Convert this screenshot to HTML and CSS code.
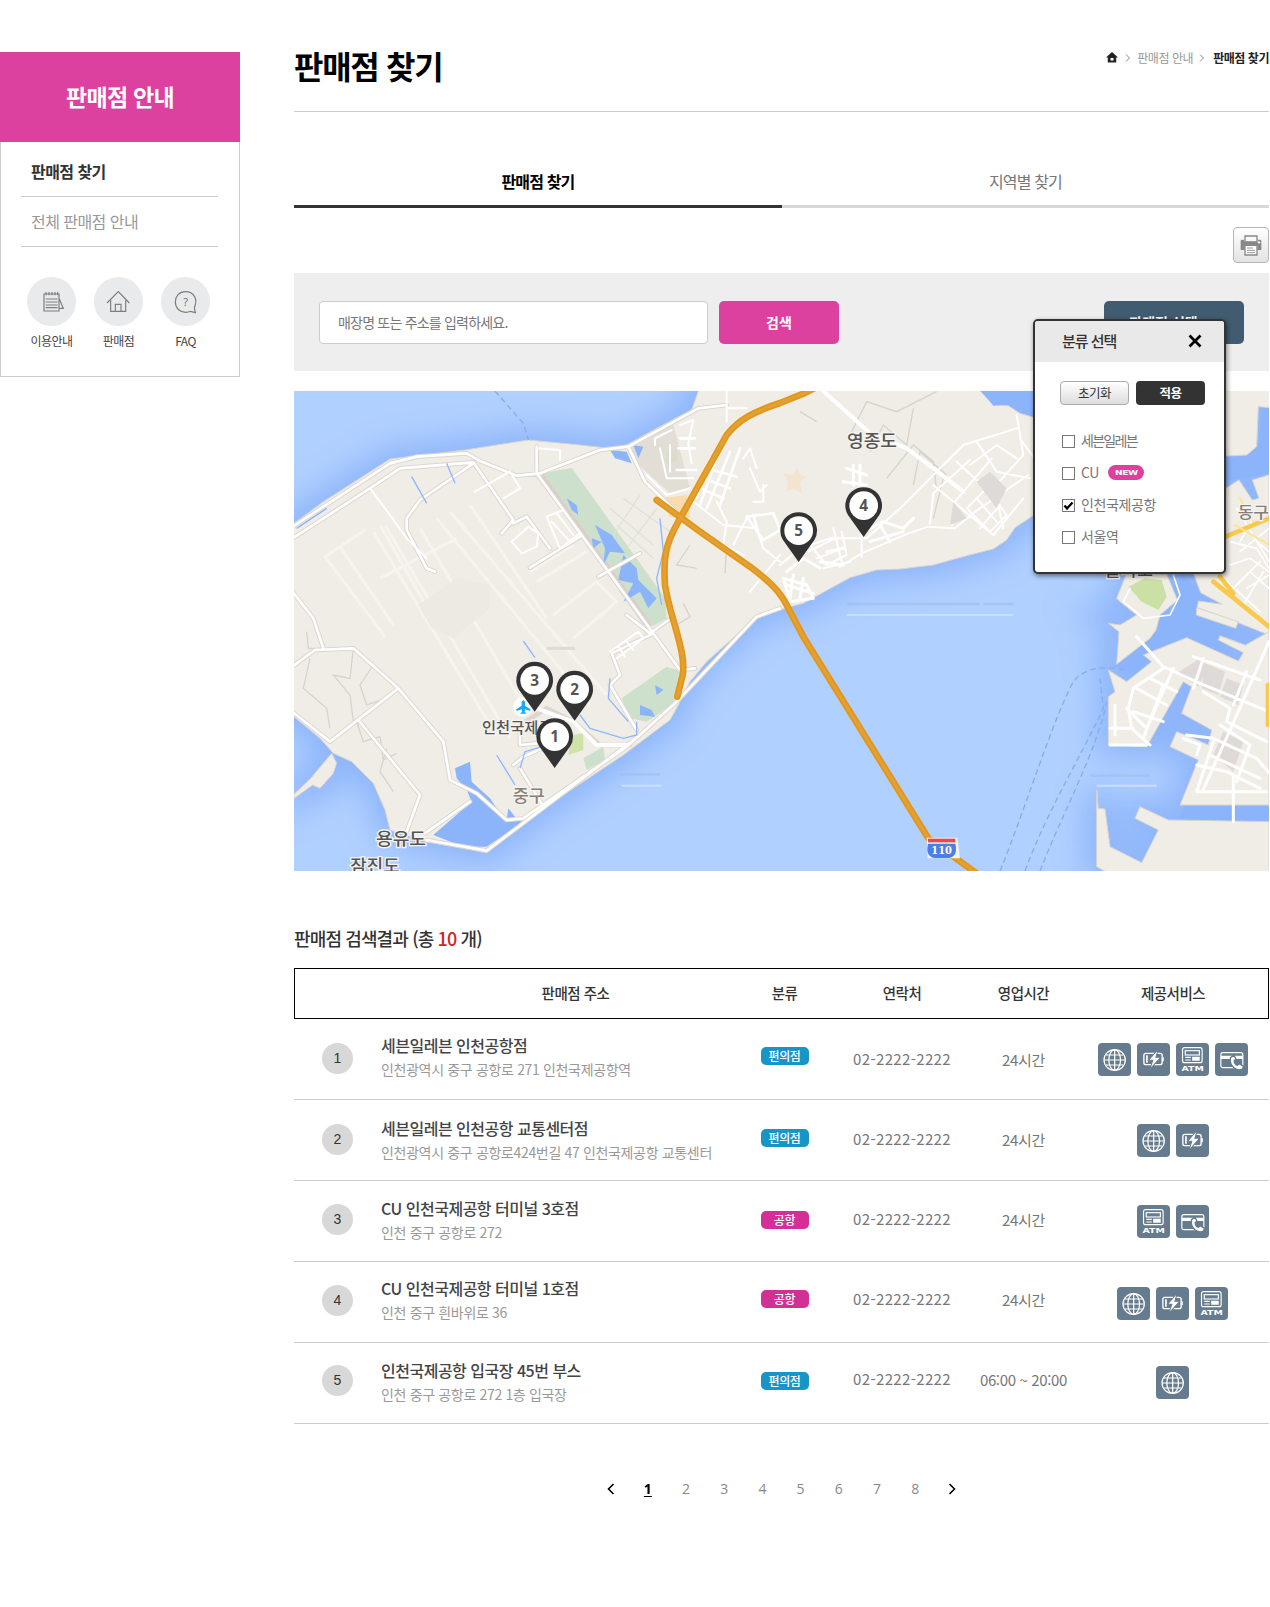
FILE: index.html
```html
<!DOCTYPE html>
<html lang="ko">
<head>
<meta charset="utf-8">
<title>판매점 찾기</title>
<link rel="stylesheet" href="styles.css">
</head>
<body>
<svg class="defs" width="0" height="0" aria-hidden="true">
  <symbol id="globe" viewBox="0 0 96 99" preserveAspectRatio="none">
    <g fill="none" stroke="#fff" stroke-width="3.6"><circle cx="48.5" cy="51" r="31"/><ellipse cx="48.5" cy="51" rx="17" ry="31"/><path d="M48.5 20v62M18 51h61M23 36h51M23 66h51"/></g>
  </symbol>
  <symbol id="charge" viewBox="0 0 96 99" preserveAspectRatio="none">
    <rect x="20" y="31" width="53" height="34" rx="6" fill="none" stroke="#fff" stroke-width="4"/>
    <path d="M29 37v22" stroke="#fff" stroke-width="5"/><path d="M76 43v12" stroke="#fff" stroke-width="4"/>
    <path d="M62 18L33 52h13l-9 28 32-37H55z" fill="#fff" stroke="#667c8e" stroke-width="3"/>
  </symbol>
  <symbol id="atm" viewBox="0 0 96 99" preserveAspectRatio="none">
    <g fill="none" stroke="#fff" stroke-width="3.4"><rect x="19" y="14" width="57" height="45" rx="6"/><rect x="27" y="23" width="41" height="13"/><path d="M27 43h16M27 51h16"/></g>
    <path d="M47 41h22v12H47z" fill="#fff"/>
    <text x="16" y="85" textLength="65" lengthAdjust="spacingAndGlyphs" font-family="DejaVu Sans" font-weight="700" font-size="21" fill="#fff">ATM</text>
  </symbol>
  <symbol id="card" viewBox="0 0 96 99" preserveAspectRatio="none">
    <rect x="17" y="29" width="64" height="45" rx="6" fill="none" stroke="#fff" stroke-width="3.4"/>
    <path d="M17 38h64v10H17z" fill="#fff"/>
    <path d="M45 44q-3 20 10 30 14 11 25 4l3-8-12-8-6 5q-9-4-9-14l5-5-6-12z" fill="#fff" stroke="#667c8e" stroke-width="4"/>
  </symbol>
</svg>
<div class="page">
  <aside class="side">
    <h2 class="side-title">판매점 안내</h2>
    <div class="side-body">
      <ul class="side-menu">
        <li class="on">판매점 찾기</li>
        <li>전체 판매점 안내</li>
      </ul>
      <ul class="quick">
        <li><span class="disc"><svg width="49" height="49" viewBox="0 0 147 147" fill="none" stroke="#7d7d7d" stroke-width="3.5"><path d="M51 51h45v51H51zM56 66h36M56 75h36M56 84h36M56 92h36M57 45v10M66 45v10M75 45v10M84 45v10M92 45v10M97 66l12 28H98"/></svg></span>이용안내</li>
        <li><span class="disc"><svg width="49" height="49" viewBox="0 0 147 147" fill="none" stroke="#7d7d7d" stroke-width="3.5"><path d="M39 78l34-34 33 34M50 70v33h45V70M64 103V82h17v21"/></svg></span>판매점</li>
        <li><span class="disc"><svg width="49" height="49" viewBox="0 0 147 147"><path d="M103 107L100 92C112 66 98 44 73 44c-18 0-30 14-30 31 0 19 14 31 31 31 6 0 11-1 14-3z" fill="none" stroke="#7d7d7d" stroke-width="3.5"/><text x="74" y="86" text-anchor="middle" font-family="Open Sans" font-size="33" fill="#666">?</text></svg></span>FAQ</li>
      </ul>
    </div>
  </aside>

  <main class="content">
    <header class="head">
      <h1>판매점 찾기</h1>
      <nav class="crumbs">
        <svg width="12" height="11" viewBox="0 0 12 11"><path d="M6 0l6 5.500h-1.800V10.500H1.800V5.500H0z" fill="#222"/><path d="M4.500 6h3v2.500h-3z" fill="#fff"/></svg>
        <svg class="sep" width="6" height="8" viewBox="0 0 6 8"><path d="M1 .5L4.500 4 1 7.500" fill="none" stroke="#888"/></svg>
        <span>판매점 안내</span>
        <svg class="sep2" width="6" height="8" viewBox="0 0 6 8"><path d="M1 .5L4.500 4 1 7.500" fill="none" stroke="#888"/></svg>
        <b>판매점 찾기</b>
      </nav>
    </header>
    <div class="tabs"><div class="tab on">판매점 찾기</div><div class="tab">지역별 찾기</div></div>
    <div class="tools">
      <button class="print" aria-label="인쇄"><svg width="22" height="21" viewBox="0 0 66 63"><path d="M15 3h36v18H15z" fill="#f8f8f8" stroke="#888" stroke-width="4"/><path d="M2 18q0-4 4-4h6v6h42v-6h6q4 0 4 4v27H52V31H14v14H2z" fill="#888"/><path d="M15 31h36v29H15z" fill="#fff" stroke="#888" stroke-width="4"/><path d="M21 39h18M21 46h24M21 53h24" stroke="#999" stroke-width="3"/><circle cx="57" cy="22" r="3.500" fill="#fff"/></svg></button>
    </div>
    <div class="search">
      <div class="field">매장명 또는 주소를 입력하세요.</div>
      <button class="btn-search">검색</button>
      <div class="picker">
        <button class="btn-pick">판매점 선택</button>
        <section class="popup">
          <div class="popup-head"><span>분류 선택</span><svg width="14" height="14" viewBox="0 0 14 14"><path d="M1.500 1.500l11 11M12.500 1.500l-11 11" stroke="#000" stroke-width="2.700"/></svg></div>
          <div class="popup-btns"><button class="reset">초기화</button><button class="apply">적용</button></div>
          <ul class="checks">
            <li><i class="box"></i><span class="tight">세븐일레븐</span></li>
            <li><i class="box"></i><span>CU</span><svg class="new" width="36" height="15" viewBox="0 0 36 15"><rect width="36" height="15" rx="7.500" fill="#dc419f"/><text x="7" y="10" textLength="22.500" lengthAdjust="spacingAndGlyphs" font-family="DejaVu Sans" font-weight="700" font-size="7" fill="#fff">NEW</text></svg></li>
            <li><i class="box"><svg width="11" height="11" viewBox="0 0 11 11"><path d="M1.500 5.500l2.500 3 5.500-6" fill="none" stroke="#000" stroke-width="2.300"/></svg></i><span>인천국제공항</span></li>
            <li><i class="box"></i><span>서울역</span></li>
          </ul>
        </section>
      </div>
    </div>

    <svg class="map" width="975" height="480" viewBox="12 18 2925 1440">
      <defs>
        <filter id="soft" x="-10%" y="-10%" width="120%" height="120%"><feGaussianBlur stdDeviation="45"/></filter>
        <g id="land">
          <path d="M-80 480L12 415 100 350 300 222 525 195 715 165 870 180 960 190 1000 185 1100 130 1205 75 1225 18V-60H2060L2070 18 2110 60 2155 62 2190 85 2240 100V385L2175 428 2150 465 2110 492 2030 512 1930 540 1830 552 1760 555 1680 578 1600 622 1540 655 1490 668 1460 678 1390 705 1250 830 1200 890 1165 960 1140 1005 1000 1110 760 1270 590 1404 520 1390 410 1370 300 1335 285 1275 250 1195 185 1130 130 1105 90 1060 0 985H-80z"/>
          <path d="M62 1180L125 1105 140 1135 130 1165 90 1210 68 1200 12 1240V1228z"/>
          <g transform="translate(1470)">
            <path d="M1300-40h200V70l-65-5-5 120-30 25-100 5z"/>
            <path d="M1337 310l40-25 40 60 20-5-20-55 50-15v480l-100-40-115-42 3-20 72 10-65-35-22-60V500z"/>
            <path d="M1010 640l30-75 120 2 32 78-52 45-12 45-18 25-100 78 7-98-32-25 35 5 50-30-50-40z"/>
            <path d="M1250 668l125 42-8 20-118-40zM1320 752l75 28-5 15-72-30z"/>
            <path d="M1040 890l75-60-25-20 130-52 155 70 15-25-75-38 5-12 75 28 72-41v520h-267l55-135-85-40 20-45 50 20 45 20 10-45-90-50 30-80-25-15-110 195-115-5V935l20-15-20-65z"/>
            <path d="M950 1215l5 55 20 2 15 113 95 48 50-98-70-35 15-35 85 40 302 5v168h-457l-60-33z"/>
          </g>
        </g>
      </defs>
      <rect x="12" y="18" width="2925" height="1440" fill="#b0d0ff"/>
      <use href="#land" fill="#84adf9" stroke="#84adf9" stroke-width="75" filter="url(#soft)" opacity=".75"/>
      <path d="M2070 10h200v130h-60l-60-75zM2700 210l130-5 75-28 10-112h30v200l-245 40zM2680 567l60 70 110 70-50 90-140 50-110 20-80-20 90-100 60-90zM2900 1110h37v200l-270-10 20-40 220-10z" fill="#8cb4fb"/>
      <use href="#land" fill="#f0ede7" stroke="#d9d4cf" stroke-width="3"/>
      <path d="M430 1350L545 1250 530 1215 500 1180 495 1150 540 1130 545 1190 600 1240 640 1300 700 1310 590 1385 520 1385z" fill="#8cb4fb"/>
      <path d="M2070 12l40 50 45-5-10-45z" fill="#8cb4fb"/>

      <!-- airfield -->
      <g fill="none" stroke="#f6f4ee" stroke-width="9">
        <path d="M225 435L105 515 285 755M150 485L310 720M250 440L600 1020M285 420L660 1060M390 430L700 960M440 400L900 960M480 380L950 930M540 360L770 700M270 580L500 460M720 560L850 480M740 590L890 500M790 690L920 590 980 650 850 760M270 420L430 700"/>
      </g>
      <path d="M385 660L500 580 600 600 600 670 490 760 425 730z" fill="#edeae3"/>
      <!-- parks -->
      <path d="M760 265L845 248 1125 640 1130 700 1090 722z" fill="#cde0cb"/><path d="M760 265L1090 722 1060 720 750 280z" fill="#d8d0c8"/>
      <path d="M995 940L1130 845 1180 860 1160 950 1070 1010 1020 1000zM880 1120L940 1085 945 1125 890 1155z" fill="#cde0cb"/>
      <path d="M845 1050l35-5v50l-45 15zM1130 200l35-10-5 40-30 10z" fill="#cfe3a8"/>
      <path d="M1020 190l130-70 50 190-60 15-110-100z" fill="#dedad2" opacity=".8"/>
      <path d="M1110 340l80-10 10 70-60-5z" fill="#f8dcae"/>
      <path d="M1480 265l30 5 10-25 10 25 20 5-20 15 5 35-25-15-20 10 5-30z" fill="#f3e4cf"/>
      <path d="M2515 605l50-25 50 5 15 50-25 40-50-25z" fill="#cbe0a5"/>
      <g fill="#8cb4fb"><path d="M960 195l50 5 15 35-50-15zM1030 180l30 5-15 35zM830 340l30 20 5 30-20-15zM905 460l30 10-25 20zM915 420l50 30 40 55-45-5-20 40 5-50zM1000 510l40 40 5 35 55 55-25 30-25-50-50 30 30-55-45-10zM1050 960l35 15 10 20-45-5zM1095 900l25 15-20 15zM655 1270l20 25-25 10z"/></g>

      <!-- small lanes -->
      <g fill="none" stroke="#d8d3cc" stroke-width="4">
        <path d="M50 740l5 50 50 0M190 790l-10 90-50-10 50 60 10 80M250 840l-40 60 20 60 60-20M60 820l-20 90 70 60 10 60M200 1010l20 60 50-15 10 70 40-20M290 1090l-20 70 40 60M1200 480l-40 60 60 10M1310 485l-5 80M1180 655l20 40-40 25M1680 150l50-100 90 30 120-60M1740 200l40-80 70 60 20-110M1790 280l80-100 60 50 10 90M1870 300l20-100 80 70M1580 110l-50-30M1930 400l30-120"/>
      </g>
      <path d="M960 370l130 110M1000 340l140 100M1010 490l90-120M980 420l110 100M970 450l80-120" fill="none" stroke="#e3dfd9" stroke-width="4"/>
      <!-- road casing and road surface -->
      <g fill="none" stroke-linejoin="round" stroke-linecap="round">
        <g stroke="#ddd6d0" stroke-width="14">
          <path d="M0 430L300 235 380 215 530 205 570 228 680 272 750 265 930 195 1015 185 1225 70 1310 60M0 465L240 310 330 250 550 232 670 405 635 445M670 415L710 395 780 490M720 548L870 455M550 235L390 345 350 400 350 435 410 550 435 560M740 185V265L1170 855 1215 850M925 575L1050 505M1010 690L1080 745 1135 705M1015 185L1065 290 1200 420"/>
          <path d="M0 850L75 795 190 790 325 910 460 1070 480 1185 560 1225 650 1305 700 1300 1010 1085 1160 950 1400 695 1470 670M0 975L120 1070 325 910M205 1005L390 1230 350 1340M0 610L70 700 100 790M1090 745L965 805 990 870 960 900 1040 1035M410 1365L590 1397 1050 1050M540 1250L405 1345M690 1150L760 1265M670 1140L700 1115 800 1070 690 1080 690 1020 770 970 850 1010 930 1080 1020 1080"/>
        </g>
        <g stroke="#fff" stroke-width="8">
          <path d="M0 430L300 235 380 215 530 205 570 228 680 272 750 265 930 195 1015 185 1225 70 1310 60M0 465L240 310 330 250 550 232 670 405 635 445M670 415L710 395 780 490M720 548L870 455M550 235L390 345 350 400 350 435 410 550 435 560M740 185V265L1170 855 1215 850M925 575L1050 505M1010 690L1080 745 1135 705M1015 185L1065 290 1200 420"/>
          <path d="M0 850L75 795 190 790 325 910 460 1070 480 1185 560 1225 650 1305 700 1300 1010 1085 1160 950 1400 695 1470 670M0 975L120 1070 325 910M205 1005L390 1230 350 1340M0 610L70 700 100 790M1090 745L965 805 990 870 960 900 1040 1035M410 1365L590 1397 1050 1050M540 1250L405 1345M690 1150L760 1265M670 1140L700 1115 800 1070 690 1080 690 1020"/>
        </g>
        <path d="M740 970L850 1010 920 1080 1010 1080M1600 18L1740 145 1850 190 1930 250 2020 320" stroke="#fff" stroke-width="12"/>
        <g stroke="#fff" stroke-width="6">
          <path d="M240 310L300 390 350 460 410 520M555 320L660 260 690 310 640 340M770 395l50-20 50 70-60 45zM785 410l55 60M800 385l50 65M665 470l50-45 30 20-5 40-45 20zM960 800l85-60 15 20-80 60M985 785l20 30M1010 770l20 25M740 190l70 5v30M1095 180v-20l50-25M1110 190l20 90 80 0M1140 180v80M1170 120l40-15-15 70 10 60M1070 270l60 60 70-20M1310 20v90M1310 70l60 0M1380 250l30 70 20-20M1400 250l-20-60-20 30M1420 300v50h-30M1260 220l-40 120M1280 350l30 60-10 70 60 30M1210 350l90 70 100 10 20 60 50 40M1330 480l40-80M1380 620l90-110"/>
          <path stroke-width="8" d="M1250 250l90 25M1240 280l80 30M1230 310l70 30M1290 190l-60 170M1320 200l-70 170M1350 190l-60 170M1370 395l80-10 20 50-50 30zM1390 390l20 70M1170 160h45M1165 190h50M1160 255h60"/>
          <path d="M1470 540L1530 490 1620 460 1730 460 1830 370 1940 260 2020 180 2180 130M1555 500l80-40M1650 545l65-40 140-60 60-20 80 5 60-50 160-110M1920 415l10-90 110-100M1930 300l180 150 90-110M2000 230l120 110 20 90M1985 420l10-70 110-130M2060 170l60 90 100 20M2180 90l20 120-100 110M2030 370l60-60 60 80-50 50zM2060 340l60 70M2070 430l60-70M1715 515v-100l-35-30M1560 480l50 60 60-30-15-70M1580 520l80-30M1600 550l80-20M1630 430l25 100M2190 160l50 70M2040 240l80-60 60 40"/>
          <path stroke-width="9" d="M1480 580l70 20 20 40-70 10zM1490 560l50-40 50 30M1490 600l80 25M1510 570l-10 70M1540 580l-10 60M1590 530l70 10M1610 500l50-10M1670 250l60 20M1690 240v60M1710 240v60M1660 290l70 10M1720 440l60-30 60 20 30-30M1740 470l100-30M1770 420l30 50"/>
        </g>
        <!-- port -->
        <g fill="#dfdad7" stroke="none"><path d="M2660 865l70-45 25 25-30 60zM2745 835l60 25-20 70-50-20zM2810 880l50 20-15 60-55-25zM2800 1040l60 30-30 90-60-50zM2060 290l40-30 50 50-30 60zM1990 350l40 50-50 20z"/></g>
        <g stroke="#fff" stroke-width="9">
          <path d="M2540 755l80 90 110 50 207 85M2937 770l-110 250-90 200M2620 850l-90 60-15 60 10 60 55 50M2510 970l60 60 80-180M2540 910l90 50M2530 980l90 30M2580 880l80 40M2560 1060l60-160M2690 1050l80 10 130 60 60 70M2740 920l80 50-10 40 120 60M2790 1020l90 60-40 110M2770 1070l-50 150 210 0M2760 1110l150 70M2720 1140l90 20 100 50M2830 1170v140M2680 1060l50 20-10 30M2475 960v90M2460 1030h70M2460 1080h110M2740 820l-30 90M2870 860l-40 100M2710 815l200 70"/>
          <path stroke-width="5" d="M2840 370l97 160M2820 470l80 20 37 60M2820 540l60-20 57 40M2830 610l80-80M2860 660l60-100M2800 580l110 100M2850 500l87-70M2890 400l-40 70M2520 610l-20 40 60 50 80-10 30-60-20-60M2880 560l57 50M2870 610l67-40M2900 470l37 30"/>
        </g>
        <path d="M2807 455L2937 400M2770 590L2937 725M2790 575l40 50M2934 900v120" stroke="#fac84c" stroke-width="14"/>
        <path d="M2835 420l102 60M2850 340l40 70" stroke="#fde58a" stroke-width="6"/>
      </g>
      <g fill="none" stroke="#8fb7fc" stroke-width="4">
        <path d="M365 275l45 80M470 235l25 60M700 768l35 50M1110 400l10 100-20 80 15 80M870 990l30 40 100 30 40-10V1010M960 880l-5 60 60 70M690 1150l15-50 100-30M620 1110l55 90M20 430l90-60"/>
      </g>
      <g fill="none" stroke="#87abef" stroke-width="4" stroke-dasharray="17 11"><path d="M615 18L700 115 715 165M2130 1458C2210 1260 2290 1000 2350 890 2380 850 2440 840 2500 855M2205 1458C2270 1280 2370 1120 2440 970L2430 880M2250 1458C2310 1300 2420 1100 2450 950"/></g>
      <g fill="none"><path d="M1670 657h400M2080 657h90M2400 1172h180M990 1168h120" stroke="#9ebdec" stroke-width="7" opacity=".6"/><path d="M770 790h85" stroke="#dedad4" stroke-width="9"/><path d="M1670 690h500M2420 1202h180M995 1202h120" stroke="#c9defb" stroke-width="6"/></g>

      <!-- expressways -->
      <g fill="none" stroke-linecap="round" stroke-linejoin="round">
        <path d="M1600 -4L1540 26 1470 54C1390 80 1345 105 1310 150L1165 410C1125 480 1120 520 1125 600 1140 700 1190 800 1178 870L1162 935M1100 345L1230 440 1380 545C1440 590 1470 620 1490 660L1540 755 1915 1360 2060 1465" stroke="#e89510" stroke-width="20"/>
        <path d="M1600 -4L1540 26 1470 54C1390 80 1345 105 1310 150L1165 410C1125 480 1120 520 1125 600 1140 700 1190 800 1178 870L1162 935M1100 345L1230 440 1380 545C1440 590 1470 620 1490 660L1540 755 1915 1360 2060 1465" stroke="#dea23c" stroke-width="9"/>
      </g>

      <g class="map-label" font-size="51">
        <text x="1671" y="187" textLength="150" lengthAdjust="spacingAndGlyphs">영종도</text>
        <text x="576" y="1043" font-size="46" textLength="254">인천국제공항</text>
        <text class="soft" x="668" y="1250" font-size="50" textLength="96" lengthAdjust="spacingAndGlyphs">중구</text>
        <text x="258" y="1381" textLength="150" lengthAdjust="spacingAndGlyphs">용유도</text>
        <text x="181" y="1461" textLength="148" lengthAdjust="spacingAndGlyphs">잠진도</text>
        <text class="soft" x="2843" y="400" font-size="48" textLength="94" lengthAdjust="spacingAndGlyphs">동구</text>
        <text x="2443" y="572" textLength="146">월미도</text>
      </g>
      <circle cx="698" cy="966" r="29" fill="#fff"/>
      <path d="M700 945l5 5v12l16 11v5l-16-5-1 8 6 5h-20l6-5-1-8-16 5v-5l16-11v-12z" fill="#18a8f5"/>
      <path d="M1910 1358h92l8 62h-97z" fill="#f5f3f1"/><path d="M1914 1361h82v11h-82z" fill="#e94a50"/><path d="M1914 1376h82q9 40-22 43h-38q-31-3-22-43z" fill="#4b7fe8"/>
      <text x="1955" y="1406" text-anchor="middle" font-family="DejaVu Serif" font-weight="700" font-size="35" fill="#fff" textLength="62" lengthAdjust="spacingAndGlyphs">110</text>

      <defs><g id="pin"><path d="M0 94L-47 28A55 55 0 1 1 47 28z" fill="#333"/><circle r="43" fill="#fff"/></g></defs>
      <g class="pins">
        <g transform="translate(734 886)"><use href="#pin"/><text y="18">3</text></g>
        <g transform="translate(854 913)"><use href="#pin"/><text y="18">2</text></g>
        <g transform="translate(794 1055)"><use href="#pin"/><text y="17">1</text></g>
        <g transform="translate(1721 362)"><use href="#pin"/><text y="17">4</text></g>
        <g transform="translate(1526 437)"><use href="#pin"/><text y="17">5</text></g>
      </g>
    </svg>

    <h2 class="result-title">판매점 검색결과 (총 <em>10</em> 개)</h2>
    <div class="table">
      <div class="thead"><span></span><span>판매점 주소</span><span>분류</span><span>연락처</span><span>영업시간</span><span>제공서비스</span></div>
      <div class="row r1"><span class="num">1</span><div class="addr"><strong>세븐일레븐 인천공항점</strong><p>인천광역시 중구 공항로 271 인천국제공항역</p></div><div class="kind"><b class="badge">편의점</b></div><span class="tel">02-2222-2222</span><span class="hours">24시간</span><div class="svc"><svg><use href="#globe"/></svg><svg><use href="#charge"/></svg><svg><use href="#atm"/></svg><svg><use href="#card"/></svg></div></div>
      <div class="row r2"><span class="num">2</span><div class="addr"><strong>세븐일레븐 인천공항 교통센터점</strong><p>인천광역시 중구 공항로424번길 47 인천국제공항 교통센터</p></div><div class="kind"><b class="badge">편의점</b></div><span class="tel">02-2222-2222</span><span class="hours">24시간</span><div class="svc"><svg><use href="#globe"/></svg><svg><use href="#charge"/></svg></div></div>
      <div class="row r3"><span class="num">3</span><div class="addr"><strong>CU 인천국제공항 터미널 3호점</strong><p>인천 중구 공항로 272</p></div><div class="kind"><b class="badge pink">공항</b></div><span class="tel">02-2222-2222</span><span class="hours">24시간</span><div class="svc"><svg><use href="#atm"/></svg><svg><use href="#card"/></svg></div></div>
      <div class="row r4"><span class="num">4</span><div class="addr"><strong>CU 인천국제공항 터미널 1호점</strong><p>인천 중구 흰바위로 36</p></div><div class="kind"><b class="badge pink">공항</b></div><span class="tel">02-2222-2222</span><span class="hours">24시간</span><div class="svc"><svg><use href="#globe"/></svg><svg><use href="#charge"/></svg><svg><use href="#atm"/></svg></div></div>
      <div class="row r5"><span class="num">5</span><div class="addr"><strong>인천국제공항 입국장 45번 부스</strong><p>인천 중구 공항로 272 1층 입국장</p></div><div class="kind"><b class="badge">편의점</b></div><span class="tel">02-2222-2222</span><span class="hours">06:00 ~ 20:00</span><div class="svc"><svg><use href="#globe"/></svg></div></div>
    </div>
    <nav class="pager">
      <svg width="8" height="12" viewBox="0 0 8 12"><path d="M6.500 1L1.500 6l5 5" fill="none" stroke="#000" stroke-width="1.600"/></svg>
      <b>1</b><a>2</a><a>3</a><a>4</a><a>5</a><a>6</a><a>7</a><a>8</a>
      <svg width="8" height="12" viewBox="0 0 8 12"><path d="M1.500 1l5 5-5 5" fill="none" stroke="#000" stroke-width="1.600"/></svg>
    </nav>
  </main>
</div>
</body>
</html>
```
FILE: styles.css
```css
* { box-sizing: border-box; margin: 0; padding: 0; }
body { font-family: "Noto Sans CJK KR", sans-serif; background: #fff; color: #333; min-height: 1607px; }
ul { list-style: none; }
button { font: inherit; border: 0; }
.defs { display: block; height: 0; }
.page { display: flex; align-items: flex-start; gap: 54px; width: 1269px; padding-top: 50px; }

/* sidebar */
.side { width: 240px; margin-top: 2px; flex: none; }
.side-title { height: 90px; line-height: 88px; background: #dc419f; color: #fff; text-align: center; font-size: 23px; letter-spacing: -.7px; }
.side-body { height: 235px; border: 1px solid #ccc; border-top: 0; padding: 5px 20px 0; }
.side-menu li { width: 197px; height: 50px; line-height: 48px; padding-left: 10px; border-bottom: 1px solid #ccc; font-size: 16px; letter-spacing: -.55px; color: #999; }
.side-menu li.on { color: #333; font-weight: 700; }
.quick { display: flex; gap: 18px; padding: 30px 0 0 6px; }
.quick li { width: 49px; text-align: center; font-size: 12px; line-height: 29px; letter-spacing: -.5px; white-space: nowrap; color: #444; }
.disc { display: block; width: 49px; height: 49px; border-radius: 50%; background: #e9eaec; }
.disc svg { display: block; }

/* heading and tabs */
.content { width: 975px; }
.head { display: flex; justify-content: space-between; height: 62px; border-bottom: 1px solid #ccc; }
.head h1 { font-size: 32px; line-height: 30px; letter-spacing: -1.300px; color: #000; }
.crumbs { display: flex; align-items: center; height: 15px; font-size: 12px; letter-spacing: -.45px; color: #999; }
.crumbs b { color: #222; }
.crumbs .sep { margin: 0 6px 0 7px; }
.crumbs .sep2 { margin: 0 8px 0 6px; }
.tabs { display: flex; margin-top: 44px; }
.tab { height: 52px; width: 487px; line-height: 51px; border-bottom: 3px solid #d8d8d8; text-align: center; font-size: 16px; letter-spacing: -.85px; color: #777; }
.tab.on { width: 488px; border-color: #333; color: #000; font-weight: 700; }
.tools { display: flex; justify-content: flex-end; padding: 19px 0 10px; }
.print { display: grid; place-items: center; width: 36px; height: 36px; border: 1px solid #b5b5b5; border-radius: 4px; background: linear-gradient(#fff, #e3e3e3); }

/* search */
.search { display: flex; height: 98px; padding: 28px 25px; background: #eee; }
.field { width: 389px; height: 43px; line-height: 40px; padding-left: 18px; border: 1px solid #ccc; border-radius: 4px; background: #fff; font-size: 14px; letter-spacing: -.8px; color: #777; }
.btn-search { width: 120px; height: 43px; margin-left: 11px; padding-bottom: 2px; border-radius: 5px; background: #dc419f; color: #fff; font-size: 14px; font-weight: 700; }
.picker { position: relative; margin-left: auto; }
.btn-pick { width: 140px; height: 43px; padding: 0 21px 2px 0; border-radius: 5px; background: #415c70; color: #fff; font-size: 14px; font-weight: 700; }
.popup { position: absolute; z-index: 2; left: -71px; top: 18px; width: 193px; height: 255px; border: 2px solid #333; border-radius: 5px; background: #fff; box-shadow: 1px 2px 5px rgba(0,0,0,.5); overflow: hidden; }
.popup-head { display: flex; justify-content: space-between; align-items: center; height: 41px; padding: 0 22px 2px 27px; background: #e9e9e9; font-size: 15px; letter-spacing: -1px; font-weight: 500; }
.popup-btns { display: flex; gap: 7px; padding: 19px 0 0 25px; }
.popup-btns button { width: 69px; height: 24px; border-radius: 4px; font-size: 12.500px; line-height: 20px; letter-spacing: -.5px; }
.reset { border: 1px solid #aaa !important; background: linear-gradient(#fff, #ddd); color: #333; }
.apply { background: #333; color: #fff; font-weight: 700; }
.checks { padding: 19px 0 0 27px; }
.checks li { display: flex; align-items: center; height: 32px; font-size: 14px; letter-spacing: -.4px; color: #777; }
.box { display: block; width: 13px; height: 13px; border: 1px solid #777; margin: 2px 6px 0 0; background: #fff; }
.box svg { display: block; }
.tight { letter-spacing: -1.700px; }
.new { margin-left: 9px; }

/* map */
.map { display: block; margin-top: 20px; }
.map-label { font-family: "Noto Sans CJK KR", sans-serif; fill: #555; stroke: #f5f3ee; stroke-width: 8; paint-order: stroke; font-weight: 500; }
.map-label .soft { fill: #888078; }
.pins text { font: 700 46px "Open Sans", sans-serif; fill: #555; text-anchor: middle; }

/* results */
.result-title { margin-top: 54px; height: 43px; line-height: 27px; font-size: 18px; font-weight: 500; letter-spacing: -.87px; white-space: nowrap; }
.result-title em { font-style: normal; color: #d8201f; }
.thead { display: grid; grid-template-columns: 122px 317px 101px 134px 109px 190px; height: 51px; border: 1px solid #000; line-height: 48px; text-align: center; font-size: 14.500px; font-weight: 500; letter-spacing: -.5px; }
.thead span { white-space: nowrap; }
.row { display: grid; grid-template-columns: 87px 355px 97px 138px 105px 193px; height: 81px; border-bottom: 1px solid #ccc; }
.row > * { min-width: 0; }
.num { justify-self: start; width: 31px; height: 31px; margin: var(--num) 0 0 28px; border-radius: 50%; background: #d8d8d8; font: 14px/31px "Liberation Sans", sans-serif; text-align: center; color: #333; }
.addr { padding-top: var(--addr); white-space: nowrap; }
.addr strong { display: block; font-size: 16px; line-height: 24px; font-weight: 500; letter-spacing: -.5px; color: #444; }
.addr p { font-size: 14px; line-height: 23px; letter-spacing: -.34px; color: #999; }
.kind { padding-top: var(--kind); }
.badge { display: block; width: 48px; height: 18px; margin: 0 auto; border-radius: 5px; background: #1795c5; color: #fff; text-align: center; font-size: 12px; line-height: 17px; font-weight: 500; letter-spacing: -.4px; }
.badge.pink { background: #d42f94; }
.tel, .hours { text-align: center; white-space: nowrap; line-height: 20px; color: #777; }
.tel { padding-top: var(--tel); font-size: 15px; letter-spacing: .35px; }
.hours { padding-top: calc(var(--tel) + 1px); font-size: 15px; letter-spacing: -.35px; }
.svc { display: flex; justify-content: center; gap: 6px; padding-top: var(--svc); }
.svc svg { width: 33px; height: 33px; flex: none; border-radius: 4px; background: #667c8e; }
.r1 { --num: 24px; --addr: 14px; --kind: 28px; --tel: 30px; --svc: 24px; }
.r2 { --num: 24px; --addr: 16px; --kind: 29px; --tel: 29px; --svc: 24px; }
.r3 { --num: 23px; --addr: 15px; --kind: 30px; --tel: 28px; --svc: 24px; }
.r4 { --num: 23px; --addr: 14px; --kind: 28px; --tel: 27px; --svc: 25px; }
.r5 { --num: 22px; --addr: 15px; --kind: 29px; --tel: 26px; --svc: 23px; }
.addr p { padding-top: 1px; }
.pager { display: flex; justify-content: center; align-items: center; margin-top: 54px; height: 22px; font: 14px/20px "Open Sans", sans-serif; color: #888; }
.pager b, .pager a { width: 38.200px; text-align: center; }
.pager b { color: #000; text-decoration: underline; text-underline-offset: 2px; }
.pager svg { margin: 0 14px; }
```
